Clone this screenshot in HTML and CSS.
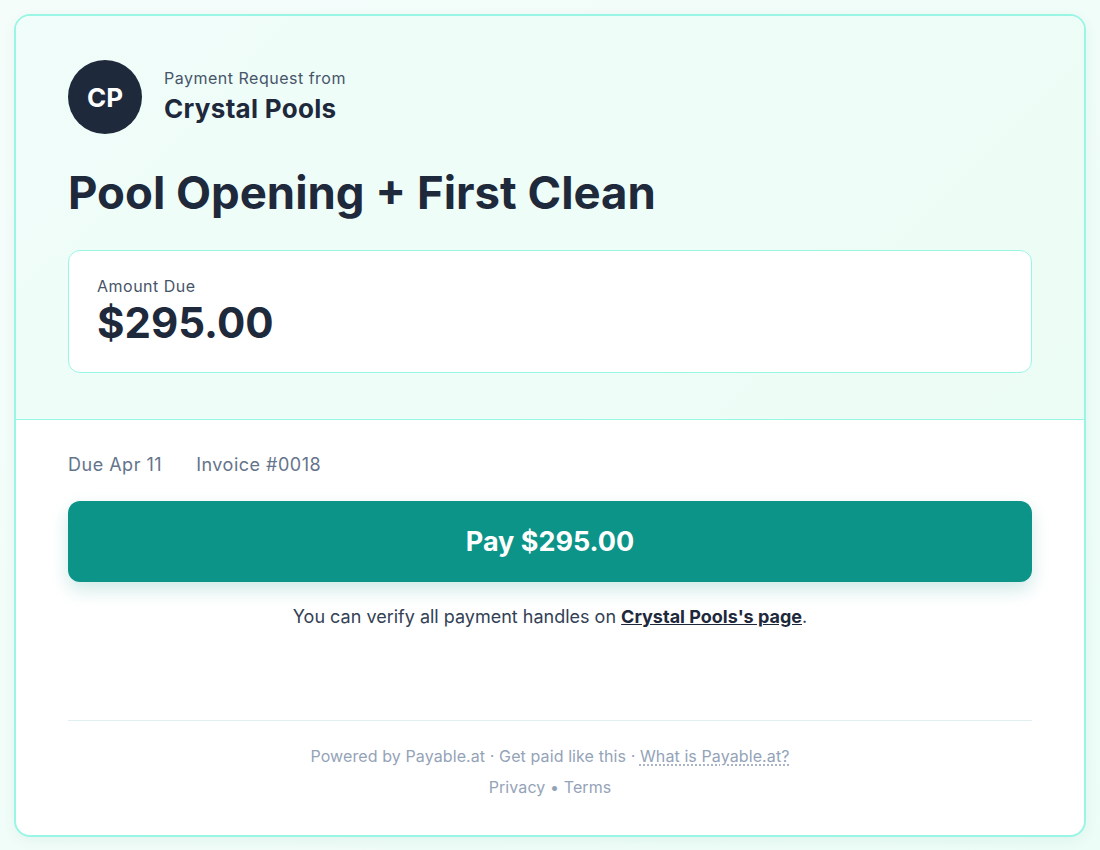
FILE: index.html
```html
<!DOCTYPE html>
<html lang="en">
<head>
  <meta charset="UTF-8" />
  <meta name="viewport" content="width=device-width, initial-scale=1.0"/>
  <title>Pool Opening + First Clean - Crystal Pools</title>
  <link rel="stylesheet" href="styles.css">
</head>
<body>

  <div class="card">
    <!-- Cabeçalho -->
    <div class="card-header">
      <div class="merchant">
        <div class="avatar">CP</div>
        <div class="merchant-info">
          <div class="merchant-label">Payment Request from</div>
          <div class="merchant-name">Crystal Pools</div>
        </div>
      </div>

      <h1 class="title">Pool Opening + First Clean</h1>

      <div class="amount-box">
        <div class="amount-label">Amount Due</div>
        <div class="amount-value">$295.00</div>
      </div>
    </div>

    <!-- Corpo -->
    <div class="card-body">
      <div class="meta">
        <span>Due Apr 11</span>
        <span>Invoice #0018</span>
      </div>

      <button class="pay-btn">Pay $295.00</button>

      <p class="verify">You can verify all payment handles on <a href="#">Crystal Pools's page</a>.</p>

      <div class="footer">
        <div class="powered">
          Powered by Payable.at · Get paid like this · <a href="#" class="what">What is Payable.at?</a>
        </div>
        <div class="legal">
          <a href="#">Privacy</a> • <a href="#">Terms</a>
        </div>
      </div>
    </div>
  </div>

</body>
</html>
```

FILE: styles.css
```css
* {
  box-sizing: border-box;
}

html, body {
  margin: 0;
  padding: 0;
  background: linear-gradient(135deg, #f5fdfb 0%, #ecfdf7 100%);
  font-family: Inter, "Noto Sans", Arial, sans-serif;
  color: #1e293b;
}

body {
  padding: 14px;
  min-height: 100vh;
}

.card {
  background: #fff;
  border: 2px solid #99f6e4;
  border-radius: 16px;
  overflow: hidden;
  box-shadow: 0 4px 14px rgba(15, 80, 70, 0.06);
}

.card-header {
  background: linear-gradient(135deg, #f0fdfa 0%, #ecfdf5 100%);
  border-bottom: 1px solid #99f6e4;
  padding: 44px 52px 46px;
}

.merchant {
  display: flex;
  align-items: center;
  gap: 22px;
}

.avatar {
  width: 74px;
  height: 74px;
  border-radius: 50%;
  background: #1e293b;
  color: #fff;
  font-weight: 700;
  font-size: 26px;
  display: flex;
  align-items: center;
  justify-content: center;
}

.merchant-label {
  font-size: 16px;
  letter-spacing: 0.5px;
  color: #475569;
  line-height: 20px;
}

.merchant-name {
  font-size: 26px;
  font-weight: 700;
  letter-spacing: 0.3px;
  line-height: 34px;
  margin-top: 4px;
}

.title {
  margin: 31px 0 29px;
  font-size: 45.5px;
  font-weight: 700;
  line-height: 56px;
}

.amount-box {
  background: #fff;
  border: 1px solid #99f6e4;
  border-radius: 12px;
  padding: 24px 28px 25px;
}

.amount-label {
  font-size: 16px;
  letter-spacing: 0.5px;
  color: #475569;
  line-height: 22px;
}

.amount-value {
  font-size: 42px;
  font-weight: 700;
  line-height: 48px;
  margin-top: 2px;
}

.card-body {
  padding: 33px 52px 37px;
}

.meta {
  display: flex;
  gap: 34px;
  font-size: 18px;
  letter-spacing: 0.5px;
  color: #64748b;
  line-height: 24px;
}

.pay-btn {
  display: block;
  width: 100%;
  margin-top: 24px;
  height: 81px;
  border: none;
  border-radius: 12px;
  background: #0d9488;
  color: #fff;
  font-family: inherit;
  font-size: 27px;
  font-weight: 700;
  cursor: pointer;
  box-shadow: 0 8px 18px rgba(13, 148, 136, 0.2);
}

.verify {
  margin: 22px 0 0;
  text-align: center;
  font-size: 18px;
  color: #334155;
  line-height: 26px;
}

.verify a {
  color: #1e293b;
  font-weight: 700;
  text-decoration: underline;
}

.footer {
  margin-top: 90px;
  border-top: 1px solid #e0f0f0;
  padding-top: 24px;
  text-align: center;
  font-size: 16px;
  letter-spacing: 0.1px;
  color: #94a3b8;
  line-height: 22px;
}

.footer a {
  color: #94a3b8;
  text-decoration: none;
}

.footer .what {
  text-decoration: underline dotted;
  text-underline-offset: 3px;
}

.legal {
  margin-top: 9px;
}
```
